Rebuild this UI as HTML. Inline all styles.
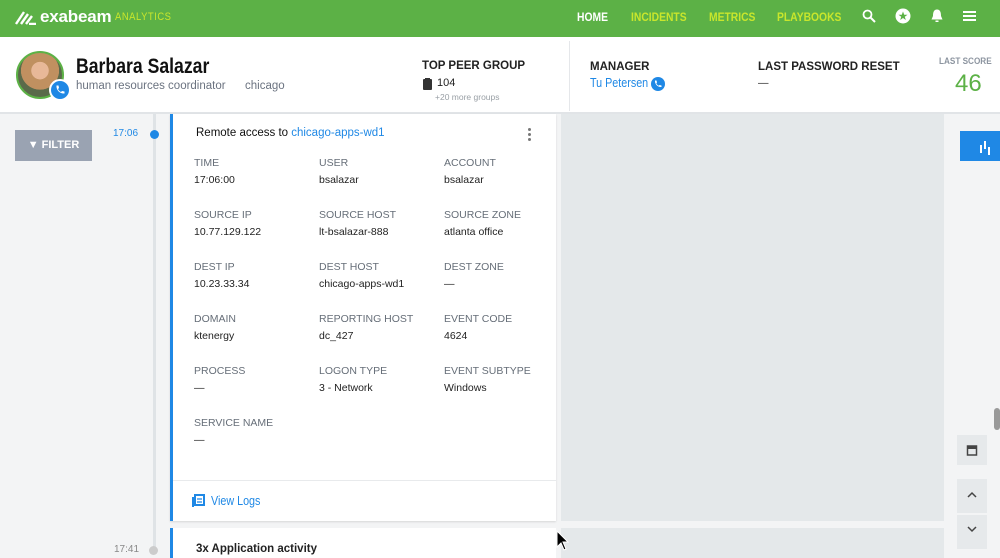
<!DOCTYPE html>
<html><head><meta charset="utf-8"><style>
*{margin:0;padding:0;box-sizing:border-box}
body{width:1000px;height:552px;overflow:hidden;background:#f3f4f5;font-family:"Liberation Sans",sans-serif;position:relative;color:#222}
.a{position:absolute;white-space:nowrap}
.c{transform-origin:0 0;transform:scaleX(0.86)}
.nav{left:0;top:0;width:1000px;height:37px;background:#5cb146}
.nv{top:10px;font-size:12px;font-weight:bold;color:#c8e62c}
.hdr{left:0;top:37px;width:1000px;height:77px;background:#fff;border-bottom:2px solid #e1e4e7}
.lab{font-size:10.5px;color:#666e78}
.val{font-size:10.5px;color:#222}
.h{font-size:11.5px;font-weight:bold;color:#222}
</style></head><body>
<div class="a nav">
<svg class="a" style="left:15px;top:9px" width="22" height="16" viewBox="0 0 22 16"><path d="M1 15 L9 3 M6 15 L13 5 M11 15 L17 7 M14 15 H21" stroke="#fff" stroke-width="2.4" fill="none"/></svg>
<div class="a" style="left:40px;top:7px;font-size:17px;color:#fff;font-weight:bold;letter-spacing:-0.2px">exabeam</div>
<div class="a c" style="left:115px;top:11px;font-size:11px;color:#c8e62c;letter-spacing:0.6px">ANALYTICS</div>
<div class="a nv c" style="left:577px;color:#fff">HOME</div>
<div class="a nv c" style="left:631px">INCIDENTS</div>
<div class="a nv c" style="left:709px">METRICS</div>
<div class="a nv c" style="left:777px">PLAYBOOKS</div>
<svg class="a" style="left:862px;top:9px" width="14" height="14"><circle cx="5.5" cy="5.5" r="4" stroke="#fff" stroke-width="1.8" fill="none"/><path d="M8.5 8.5 L13 13" stroke="#fff" stroke-width="2"/></svg>
<svg class="a" style="left:895px;top:8px" width="16" height="16"><circle cx="8" cy="8" r="7.5" fill="#fff"/><path d="M8 3.5 L9.2 6.8 L12.5 6.8 L9.8 8.8 L10.8 12 L8 10 L5.2 12 L6.2 8.8 L3.5 6.8 L6.8 6.8Z" fill="#5cb146"/></svg>
<svg class="a" style="left:930px;top:8px" width="14" height="16"><path d="M7 1.5 C3.5 1.5 3 5 3 8 L1.5 11.5 H12.5 L11 8 C11 5 10.5 1.5 7 1.5Z M5.5 12.5 H8.5 V14 H5.5Z" fill="#fff"/></svg>
<div class="a" style="left:963px;top:11px;width:13px;height:2px;background:#fff;box-shadow:0 4px 0 #fff,0 8px 0 #fff"></div>
</div>
<div class="a hdr">
<div class="a" style="left:16px;top:14px;width:48px;height:48px;border-radius:50%;border:2px solid #5cb146;background:radial-gradient(circle at 50% 40%,#e8b898 0 25%,#c09060 26% 55%,#5a6a4a 56%)"></div>
<svg class="a" style="left:49px;top:42px" width="22" height="22"><circle cx="11" cy="11" r="10" fill="#1f88e5" stroke="#fff" stroke-width="2"/><path d="M7.5 6.5 L9.5 6.5 L10 9 L9 10 C9.8 11.6 10.4 12.2 12 13 L13 12 L15.5 12.5 L15.5 14.5 C11 15 7 11 7.5 6.5Z" fill="#fff"/></svg>
<div class="a" style="left:76px;top:18px;font-size:21px;font-weight:bold;color:#111;transform-origin:0 0;transform:scaleX(0.84)">Barbara Salazar</div>
<div class="a" style="left:76px;top:43px;font-size:11.5px;color:#6b7380">human resources coordinator</div>
<div class="a" style="left:245px;top:43px;font-size:11.5px;color:#6b7380">chicago</div>
<div class="a h" style="left:422px;top:23px">TOP PEER GROUP</div>
<div class="a" style="left:423px;top:42px;width:9px;height:11px;background:#333;border-radius:1px"></div>
<div class="a" style="left:425px;top:41px;width:5px;height:2px;background:#333"></div>
<div class="a val" style="left:437px;top:40px;font-size:11px">104</div>
<div class="a" style="left:435px;top:55px;font-size:8.5px;color:#9aa0a6">+20 more groups</div>
<div class="a" style="left:569px;top:4px;width:1px;height:70px;background:#e5e7ea"></div>
<div class="a h" style="left:590px;top:24px">MANAGER</div>
<div class="a c" style="left:590px;top:39px;font-size:12.5px;color:#1f88e5">Tu Petersen</div>
<svg class="a" style="left:651px;top:40px" width="14" height="14"><circle cx="7" cy="7" r="7" fill="#1f88e5"/><path d="M4 3.5 L5.5 3.5 L6 5.5 L5.3 6.2 C5.9 7.4 6.6 8.1 7.8 8.7 L8.5 8 L10.5 8.5 L10.5 10 C7 10.5 3.5 7 4 3.5Z" fill="#fff"/></svg>
<div class="a h" style="left:758px;top:24px">LAST PASSWORD RESET</div>
<div class="a val" style="left:758px;top:40px">—</div>
<div class="a c" style="left:939px;top:19px;font-size:9.5px;font-weight:bold;color:#8d95a0">LAST SCORE</div>
<div class="a" style="left:955px;top:33px;font-size:24px;color:#5cb146">46</div>
</div>
<div class="a" style="left:15px;top:130px;width:77px;height:31px;background:#9aa3b2;color:#fff;font-size:11px;font-weight:bold;text-align:center;line-height:31px">▼ FILTER</div>
<div class="a" style="left:153px;top:114px;width:3px;height:438px;background:#dfe3e6"></div>
<div class="a" style="left:113px;top:128px;font-size:10px;color:#1f88e5">17:06</div>
<div class="a" style="left:150px;top:130px;width:9px;height:9px;border-radius:50%;background:#1f88e5"></div>
<div class="a" style="left:114px;top:544px;font-size:10px;color:#888">17:41</div>
<div class="a" style="left:149px;top:546px;width:9px;height:9px;border-radius:50%;background:#ccc"></div>
<div class="a" style="left:170px;top:114px;width:386px;height:407px;background:#fff;border-left:3px solid #1f88e5;box-shadow:0 1px 2px rgba(0,0,0,.12)"></div>
<div class="a" style="left:173px;top:480px;width:383px;height:1px;background:#e8eaec"></div>
<div class="a" style="left:196px;top:127px;font-size:11.5px;color:#111">Remote access to <span style="color:#1f88e5">chicago-apps-wd1</span></div>
<div class="a" style="left:528px;top:128px;width:3px;height:3px;background:#777;border-radius:50%;box-shadow:0 5px 0 #777,0 10px 0 #777"></div>
<div class="a lab" style="left:194px;top:157px">TIME</div><div class="a val" style="left:194px;top:174px">17:06:00</div>
<div class="a lab" style="left:319px;top:157px">USER</div><div class="a val" style="left:319px;top:174px">bsalazar</div>
<div class="a lab" style="left:444px;top:157px">ACCOUNT</div><div class="a val" style="left:444px;top:174px">bsalazar</div>
<div class="a lab" style="left:194px;top:209px">SOURCE IP</div><div class="a val" style="left:194px;top:226px">10.77.129.122</div>
<div class="a lab" style="left:319px;top:209px">SOURCE HOST</div><div class="a val" style="left:319px;top:226px">lt-bsalazar-888</div>
<div class="a lab" style="left:444px;top:209px">SOURCE ZONE</div><div class="a val" style="left:444px;top:226px">atlanta office</div>
<div class="a lab" style="left:194px;top:261px">DEST IP</div><div class="a val" style="left:194px;top:278px">10.23.33.34</div>
<div class="a lab" style="left:319px;top:261px">DEST HOST</div><div class="a val" style="left:319px;top:278px">chicago-apps-wd1</div>
<div class="a lab" style="left:444px;top:261px">DEST ZONE</div><div class="a val" style="left:444px;top:278px">—</div>
<div class="a lab" style="left:194px;top:313px">DOMAIN</div><div class="a val" style="left:194px;top:330px">ktenergy</div>
<div class="a lab" style="left:319px;top:313px">REPORTING HOST</div><div class="a val" style="left:319px;top:330px">dc_427</div>
<div class="a lab" style="left:444px;top:313px">EVENT CODE</div><div class="a val" style="left:444px;top:330px">4624</div>
<div class="a lab" style="left:194px;top:365px">PROCESS</div><div class="a val" style="left:194px;top:382px">—</div>
<div class="a lab" style="left:319px;top:365px">LOGON TYPE</div><div class="a val" style="left:319px;top:382px">3 - Network</div>
<div class="a lab" style="left:444px;top:365px">EVENT SUBTYPE</div><div class="a val" style="left:444px;top:382px">Windows</div>
<div class="a lab" style="left:194px;top:417px">SERVICE NAME</div><div class="a val" style="left:194px;top:434px">—</div>
<svg class="a" style="left:191px;top:494px" width="14" height="14"><rect x="1" y="3" width="2" height="10" fill="#1f88e5"/><rect x="4" y="1" width="9" height="10" fill="none" stroke="#1f88e5" stroke-width="2"/><path d="M6 5 H11 M6 8 H11" stroke="#1f88e5" stroke-width="1.2"/></svg>
<div class="a c" style="left:211px;top:494px;font-size:12.5px;color:#1f88e5">View Logs</div>
<div class="a" style="left:561px;top:114px;width:383px;height:407px;background:#e4e8ea"></div>
<div class="a" style="left:170px;top:528px;width:386px;height:30px;background:#fff;border-left:3px solid #1f88e5"></div>
<div class="a" style="left:196px;top:543px;font-size:11.5px;font-weight:bold">3x Application activity</div>
<div class="a" style="left:561px;top:528px;width:383px;height:30px;background:#e4e8ea"></div>
<div class="a" style="left:960px;top:131px;width:40px;height:30px;background:#1f88e5"></div>
<div class="a" style="left:980px;top:145px;width:2px;height:8px;background:#fff;box-shadow:4px -4px 0 #fff,8px 2px 0 #fff"></div>
<div class="a" style="left:994px;top:408px;width:6px;height:22px;background:#999;border-radius:3px"></div>
<div class="a" style="left:957px;top:435px;width:30px;height:30px;background:#e6e9eb"></div>
<svg class="a" style="left:966px;top:444px" width="12" height="12"><rect x="1.5" y="2" width="9" height="9" fill="none" stroke="#444" stroke-width="1.5"/><rect x="1.5" y="2" width="9" height="3" fill="#444"/></svg>
<div class="a" style="left:957px;top:479px;width:30px;height:34px;background:#e6e9eb"></div>
<div class="a" style="left:957px;top:515px;width:30px;height:34px;background:#e6e9eb"></div>
<svg class="a" style="left:966px;top:490px" width="12" height="10"><path d="M2 7 L6 3 L10 7" stroke="#444" stroke-width="1.5" fill="none"/></svg>
<svg class="a" style="left:966px;top:524px" width="12" height="10"><path d="M2 3 L6 7 L10 3" stroke="#444" stroke-width="1.5" fill="none"/></svg>
<svg class="a" style="left:556px;top:530px" width="14" height="22"><path d="M1 1 L1 17 L5 13 L8 20 L10 19 L7 12 L12 12Z" fill="#000" stroke="#fff" stroke-width="1"/></svg>
</body></html>
